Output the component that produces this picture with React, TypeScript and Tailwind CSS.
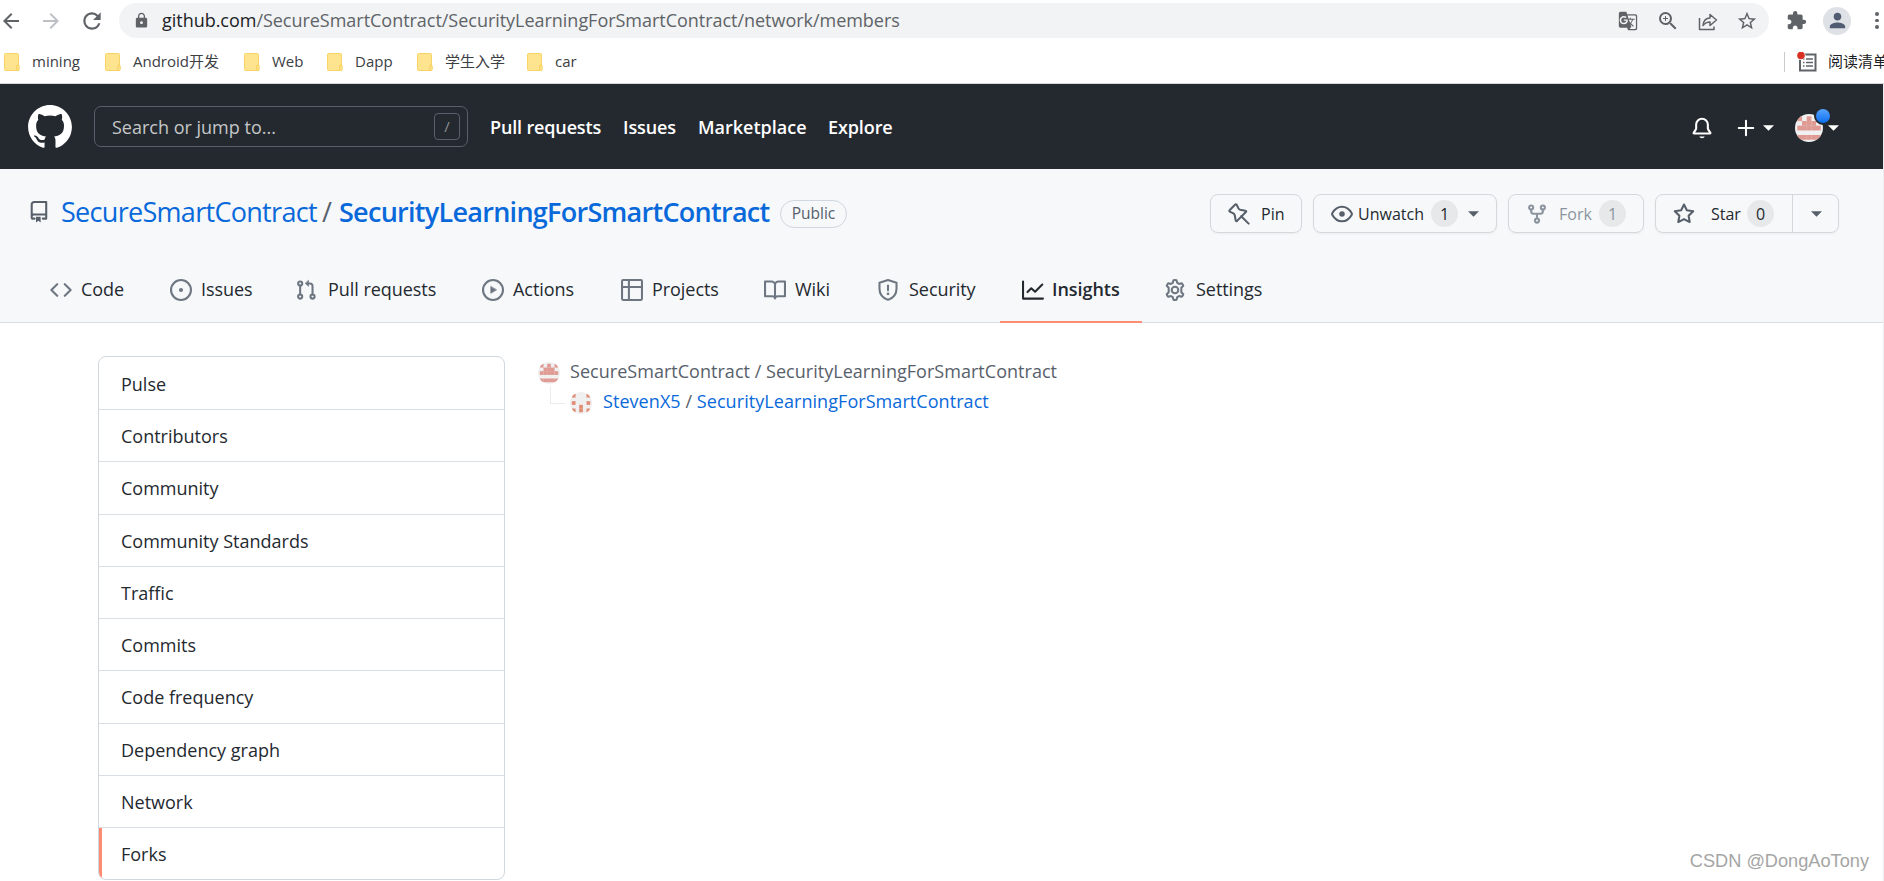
import React from "react";
import { MdArrowBack, MdArrowForward, MdRefresh, MdLock, MdGTranslate, MdZoomIn, MdStarBorder, MdExtension, MdPerson } from "react-icons/md";

const bookmarks = [
  { label: "mining", className: "w-[101px]" },
  { label: "Android开发", className: "w-[139px]" },
  { label: "Web", className: "w-[83px]" },
  { label: "Dapp", className: "w-[90px]" },
  { label: "学生入学", className: "w-[110px]" },
  { label: "car", className: "w-[60px]" },
];

const sidebarItems = [
  "Pulse",
  "Contributors",
  "Community",
  "Community Standards",
  "Traffic",
  "Commits",
  "Code frequency",
  "Dependency graph",
  "Network",
  "Forks",
];

type IconProps = { children: React.ReactNode; className?: string };

const Icon = ({ children, className = "" }: IconProps): JSX.Element => (
  <svg viewBox="0 0 16 16" className={`w-[22px] h-[22px] shrink-0 ${className}`} fill="none" stroke="currentColor" strokeWidth="1.5" strokeLinecap="round" strokeLinejoin="round">
    {children}
  </svg>
);

const CodeIcon = () => (
  <Icon>
    <path d="M5.25 3.75 1 8l4.25 4.25M10.75 3.75 15 8l-4.25 4.25" />
  </Icon>
);

const IssueIcon = () => (
  <Icon>
    <circle cx="8" cy="8" r="7.25" />
    <circle cx="8" cy="8" r="1.5" fill="currentColor" stroke="none" />
  </Icon>
);

const PullRequestIcon = () => (
  <Icon>
    <circle cx="3.75" cy="3.25" r="1.5" />
    <circle cx="3.75" cy="12.75" r="1.5" />
    <circle cx="12.75" cy="12.75" r="1.5" />
    <path d="M3.75 4.75v6.5M12.75 11.25V5a1.75 1.75 0 0 0-1.75-1.75H9.5" />
    <path d="M9.8 1.2v4.1L7.6 3.25z" fill="currentColor" strokeWidth=".5" />
  </Icon>
);

const PlayIcon = () => (
  <Icon>
    <circle cx="8" cy="8" r="7.25" />
    <path d="M6.4 5.6v4.8L10.4 8z" fill="currentColor" strokeWidth=".5" />
  </Icon>
);

const ProjectsIcon = () => (
  <Icon>
    <rect x=".75" y=".75" width="14.5" height="14.5" rx=".8" />
    <path d="M5.75 1v14M1 5.75h14" />
  </Icon>
);

const BookIcon = () => (
  <Icon>
    <path d="M8 14.2c0-1 .9-1.7 2.2-1.7h5.05V1.75H10.7C9.2 1.75 8 2.9 8 4.3zM8 14.2c0-1-.9-1.7-2.2-1.7H.75V1.75H5.3C6.8 1.75 8 2.9 8 4.3z" />
  </Icon>
);

const ShieldIcon = () => (
  <Icon>
    <path d="M8 .8 14.2 2.8V7c0 4.3-2.3 6.7-6.2 8.2C4.1 13.7 1.8 11.3 1.8 7V2.8z" />
    <path d="M8 4.75v3.5" />
    <circle cx="8" cy="10.8" r="1" fill="currentColor" stroke="none" />
  </Icon>
);

const GraphIcon = () => (
  <Icon>
    <path d="M.75 1.75v12.5h14.5M4 9.5l2.75-2.75 2.75 2.5 5.25-5.25" />
  </Icon>
);

const GearIcon = () => (
  <Icon>
    <circle cx="8" cy="8" r="2.4" />
    <path d="M6.900.9Q8 .6 9.100.9l.55 1.900 1.300.75 1.950-.5q.8.750 1.100 1.900L12.600 6.400v1.600 1.600L14 11.050q-.3 1.150-1.100 1.900l-1.950-.5-1.300.75-.55 1.900Q8 15.400 6.900 15.100l-.55-1.900-1.300-.75-1.950.5Q2.300 12.200 2 11.050L3.400 9.600V6.400L2 4.950q.3-1.150 1.100-1.900l1.950.5 1.300-.75z" />
  </Icon>
);

const PinIcon = () => (
  <Icon>
    <path d="M9.6 9.6 15 15M5.1 1.3q.55-.7 1.2 0l1.3 2.6q.4.8 1.3 1l3.7.7q1 .3.4 1L6.6 13q-.7.6-1-.4l-.7-3.7q-.2-.9-1-1.3L1.300 6.300q-.7-.65 0-1.200z" />
  </Icon>
);

const EyeIcon = () => (
  <Icon>
    <path d="M8 2.75c3.5 0 5.8 2.5 7 4.6q.4.65 0 1.3c-1.2 2.100-3.500 4.600-7 4.600s-5.800-2.500-7-4.600q-.4-.65 0-1.300c1.200-2.100 3.500-4.600 7-4.600z" />
    <circle cx="8" cy="8" r="2" fill="currentColor" stroke="none" />
  </Icon>
);

const ForkIcon = () => (
  <Icon>
    <circle cx="3.75" cy="3.25" r="1.5" />
    <circle cx="12.25" cy="3.25" r="1.5" />
    <circle cx="8" cy="12.75" r="1.5" />
    <path d="M3.75 4.75v1.5c0 .8.7 1.5 1.5 1.5h5.5c.8 0 1.5-.7 1.5-1.5v-1.5M8 7.75v3.5" />
  </Icon>
);

const StarIcon = () => (
  <Icon>
    <path d="m8 1.1 2.070 4.200 4.630.67-3.350 3.270.79 4.610L8 11.670l-4.140 2.180.79-4.610L1.300 5.970l4.630-.67z" />
  </Icon>
);

const Caret = ({ className = "" }: { className?: string }) => (
  <svg viewBox="0 0 12 6" className={`w-[11px] h-[6px] shrink-0 ${className}`} fill="currentColor">
    <path d="M0 0h12L6 6z" />
  </svg>
);

// 5x5 identicon, rows of 1/0 flags
const Identicon = ({ rows, className, color }: { rows: string[]; className: string; color: string }) => (
  <svg viewBox="0 0 6 6" className={`rounded-full bg-[#f0f0f0] shrink-0 ${className}`} fill={color}>
    {rows.map((row, y) =>
      row.split("").map((cell, x) => (cell === "1" ? <rect key={`${x}-${y}`} x={x + 0.5} y={y + 0.5} width="1.02" height="1.02" /> : null))
    )}
  </svg>
);

const ownerRows = ["10101", "01110", "11111", "00000", "11111"];
const stevenRows = ["10001", "00000", "10001", "00100", "10101"];

const tabs = [
  { label: "Code", icon: <CodeIcon />, className: "w-[120px]" },
  { label: "Issues", icon: <IssueIcon />, className: "w-[125px]" },
  { label: "Pull requests", icon: <PullRequestIcon />, className: "w-[187px] [&>span]:ml-[2px]" },
  { label: "Actions", icon: <PlayIcon />, className: "w-[139px]" },
  { label: "Projects", icon: <ProjectsIcon />, className: "w-[143px]" },
  { label: "Wiki", icon: <BookIcon />, className: "w-[113px]" },
  { label: "Security", icon: <ShieldIcon />, className: "w-[145px] [&>span]:ml-px" },
  { label: "Insights", icon: <GraphIcon />, className: "w-[142px] [&>span]:-ml-px", active: true },
  { label: "Settings", icon: <GearIcon />, className: "w-[144px] [&>span]:ml-px" },
];

const BrowserBar = (): JSX.Element => (
  <div className="h-[84px] bg-white border-b border-[#d5d7da] overflow-hidden text-[#5f6368]">
    <div className="flex items-center h-[41px]">
      <MdArrowBack className="w-[24px] h-[24px] -ml-px shrink-0" />
      <MdArrowForward className="w-[24px] h-[24px] ml-[16px] shrink-0 text-[#bdc1c6]" />
      <MdRefresh className="w-[26px] h-[26px] ml-[16px] shrink-0" />
      <div className="flex items-center w-[1650px] h-[35px] ml-[14px] shrink-0 rounded-full bg-[#f1f3f4]">
        <MdLock className="w-[17px] h-[17px] ml-[14px] shrink-0" />
        <div className="ml-[12px] text-[18px] whitespace-nowrap tracking-[-0.03px]">
          <span className="text-[#202124]">github.com</span>/SecureSmartContract/SecurityLearningForSmartContract/network/members
        </div>
        <div className="flex items-center gap-[18px] ml-auto mr-[11px]">
          <MdGTranslate className="w-[20px] h-[20px]" />
          <MdZoomIn className="w-[24px] h-[24px]" />
          <svg viewBox="0 0 20 20" className="w-[20px] h-[20px]" fill="none" stroke="currentColor" strokeWidth="1.5">
            <path d="M1.5 7v11.500h14.500v-3M5 14.500c.5-4.500 3-7.500 7-7.500V3.500l6.500 5.500-6.500 5.500v-3.500c-3 0-5 1-7 3.500z" strokeLinejoin="round" />
          </svg>
          <MdStarBorder className="w-[22px] h-[22px]" />
        </div>
      </div>
      <MdExtension className="w-[21px] h-[21px] ml-[17px] shrink-0" />
      <div className="flex items-center justify-center w-[28px] h-[28px] ml-[16px] shrink-0 rounded-full bg-[#dee1e6] text-[#515c73]">
        <MdPerson className="w-[23px] h-[23px]" />
      </div>
      <div className="flex flex-col gap-[3px] ml-[24px]">
        <span className="w-[3.5px] h-[3.5px] rounded-full bg-[#5f6368]" />
        <span className="w-[3.5px] h-[3.5px] rounded-full bg-[#5f6368]" />
        <span className="w-[3.5px] h-[3.5px] rounded-full bg-[#5f6368]" />
      </div>
    </div>

    {/* Bookmarks */}
    <div className="flex items-center h-[41px] pl-[4px] text-[15px] text-[#3c4043] whitespace-nowrap">
      {bookmarks.map((bookmark) => (
        <div key={bookmark.label} className={`flex items-center shrink-0 ${bookmark.className}`}>
          <svg viewBox="0 0 16 18" className="w-[16px] h-[18px] mr-[12px] shrink-0">
            <rect x=".5" y=".5" width="14" height="17" rx="1" fill="#ffe48f" stroke="#f8d466" />
            <rect x="12.7" y="12" width="2.5" height="5.5" rx="1" fill="#ffe48f" stroke="#f2c94f" strokeWidth=".8" />
          </svg>
          <span>{bookmark.label}</span>
        </div>
      ))}
      <div className="flex items-center shrink-0 ml-auto -mr-[4px]">
        <div className="w-px h-[20px] bg-[#c9cbce] mr-[12px]" />
        <svg viewBox="0 0 20 20" className="w-[20px] h-[20px] mr-[12px]">
          <rect x="3" y="2.5" width="15.5" height="16" fill="none" stroke="#5f6368" strokeWidth="2" />
          <path d="M6 7h1.5M9 7h7M6 10.5h1.5M9 10.5h7M6 14h1.5M9 14h7" stroke="#5f6368" strokeWidth="1.5" />
          <circle cx="4" cy="3.5" r="4.5" fill="#fff" />
          <circle cx="4" cy="3.5" r="3.8" fill="#d93025" />
        </svg>
        <span className="text-[15px] text-[#202124] -ml-px">阅读清单</span>
      </div>
    </div>
  </div>
);

const GlobalHeader = (): JSX.Element => (
  <header className="flex items-center h-[85px] bg-[#24292f] text-white">
    <svg viewBox="0 0 16 15.7" className="w-[44px] h-[43px] ml-[28px] shrink-0" fill="currentColor">
      <path d="M8 0C3.58 0 0 3.58 0 8c0 3.54 2.29 6.53 5.47 7.59.4.07.55-.17.55-.38 0-.19-.01-.82-.01-1.49-2.01.37-2.53-.49-2.69-.94-.09-.23-.48-.94-.82-1.13-.28-.15-.68-.52-.01-.53.63-.01 1.08.58 1.23.82.72 1.21 1.87.87 2.33.66.07-.52.28-.87.51-1.07-1.78-.2-3.64-.89-3.64-3.95 0-.87.31-1.59.82-2.15-.08-.2-.36-1.02.08-2.12 0 0 .67-.21 2.2.82.64-.18 1.32-.27 2-.27.68 0 1.36.09 2 .27 1.53-1.04 2.2-.82 2.2-.82.44 1.1.16 1.92.08 2.12.51.56.82 1.27.82 2.15 0 3.07-1.87 3.75-3.65 3.95.29.25.54.73.54 1.48 0 1.07-.01 1.93-.01 2.2 0 .21.15.46.55.38A8.013 8.013 0 0 0 16 8c0-4.42-3.58-8-8-8z" />
    </svg>
    <div className="flex items-center w-[374px] h-[41px] ml-[22px] pl-[17px] pr-[7px] shrink-0 rounded-[7px] border border-[#57606a] text-[18px] text-[#c5c7c9]">
      <span className="grow pt-[2px]">Search or jump to...</span>
      <span className="flex items-center justify-center w-[26px] h-[27px] rounded-[4px] border border-[#57606a] text-[15px] text-[#8b9096]">/</span>
    </div>
    <nav className="flex items-center ml-[22px] pt-[2px] text-[18px] font-semibold whitespace-nowrap">
      <a className="w-[133px] tracking-[-0.15px]">Pull requests</a>
      <a className="w-[75px] tracking-[-0.1px]">Issues</a>
      <a className="w-[130px]">Marketplace</a>
      <a className="tracking-[-0.1px]">Explore</a>
    </nav>
    <div className="flex items-center ml-auto mr-[44px] pt-[2px]">
      <Icon>
        <path d="M8 1.25A4.25 4.25 0 0 0 3.75 5.5v2.7q0 .4-.2.8L1.9 11.5q-.2.5.3.5h11.6q.5 0 .3-.5L12.45 9q-.2-.4-.2-.8V5.5A4.25 4.25 0 0 0 8 1.25z" />
        <path d="M6 14.200h4a2.100 1.800 0 0 1-4 0z" fill="currentColor" stroke="none" />
      </Icon>
      <Icon className="ml-[22px]">
        <path d="M8 2.75v10.5M2.75 8h10.5" />
      </Icon>
      <Caret className="ml-[6px]" />
      <div className="relative ml-[21px]">
        <Identicon rows={ownerRows} className="w-[28px] h-[28px]" color="#df9a93" />
        <span className="absolute -top-[7px] left-[19px] w-[18px] h-[18px] rounded-full border-2 border-[#24292f] bg-linear-to-b from-[#54a3ff] to-[#006eed]" />
      </div>
      <Caret className="ml-[5px]" />
    </div>
  </header>
);

const Counter = ({ children }: { children: React.ReactNode }) => (
  <span className="flex items-center justify-center w-[27px] h-[27px] shrink-0 rounded-full bg-[#e6e8ea]">{children}</span>
);

const RepoHeader = (): JSX.Element => (
  <section className="h-[154px] bg-[#f6f8fa] border-b border-[#d8dee4]">
    <div className="flex items-center h-[89px]">
      <Icon className="ml-[28px] mb-[3px] text-[#57606a]">
        <path d="M4.75 12.8H3.2q-.5 0-.5-.5V2.5A1.75 1.75 0 0 1 4.45.75h8.8v12.05h-2.5M2.7 12V11a1.5 1.5 0 0 1 1.5-1.25h9" />
        <path d="M5.8 11.5h3.4v4.2L7.5 14.4l-1.7 1.3z" fill="currentColor" stroke="none" />
      </Icon>
      <div className="flex items-center ml-[11px] mb-[2px] text-[27px] text-[#0969da] whitespace-nowrap">
        <span className="w-[261px] tracking-[-0.7px]">SecureSmartContract</span>
        <span className="w-[17px] text-[#57606a]">/</span>
        <span className="w-[441px] font-semibold tracking-[-0.72px]">SecurityLearningForSmartContract</span>
      </div>
      <span className="flex items-center justify-center w-[67px] h-[28px] shrink-0 rounded-full border border-[#d0d7de] text-[15.5px] font-medium text-[#57606a]">Public</span>

      <div className="flex items-center ml-auto mr-[44px] text-[16px] font-medium text-[#24292f] whitespace-nowrap">
        <div className="flex items-center w-[92px] h-[39px] pl-[17px] rounded-[8px] border border-[#d5d8da] shadow-xs [&_svg]:text-[#57606a]">
          <PinIcon />
          <span className="ml-[11px]">Pin</span>
        </div>
        <div className="flex items-center w-[184px] h-[39px] ml-[11px] pl-[17px] rounded-[8px] border border-[#d5d8da] shadow-xs [&_svg]:text-[#57606a]">
          <EyeIcon />
          <span className="ml-[5px] w-[73px]">Unwatch</span>
          <Counter>1</Counter>
          <Caret className="ml-[10px]" />
        </div>
        <div className="flex items-center w-[136px] h-[39px] ml-[11px] pl-[17px] rounded-[8px] border border-[#d5d8da] shadow-xs text-[#8c959f]">
          <ForkIcon />
          <span className="ml-[11px] w-[40px]">Fork</span>
          <Counter>1</Counter>
        </div>
        <div className="flex items-center w-[184px] h-[39px] ml-[11px] rounded-[8px] border border-[#d5d8da] shadow-xs [&_svg]:text-[#57606a]">
          <div className="flex items-center w-[137px] h-full pl-[17px] border-r border-[#d5d8da]">
            <StarIcon />
            <span className="ml-[16px] w-[36px]">Star</span>
            <Counter>0</Counter>
          </div>
          <Caret className="ml-[18px]" />
        </div>
      </div>
    </div>

    <nav className="flex h-[65px] pl-[28px] text-[18px] text-[#24292f] whitespace-nowrap">
      {tabs.map((tab) => (
        <a
          key={tab.label}
          className={`flex items-center h-full pl-[22px] pb-[2px] pt-[2px] gap-[9px] shrink-0 ${tab.className} ${
            tab.active ? "font-semibold border-b-2 border-[#fd8c73]" : "border-b-2 border-transparent [&>svg]:text-[#6e7781]"
          }`}
        >
          {tab.icon}
          <span className="tracking-[-0.05px]">{tab.label}</span>
        </a>
      ))}
    </nav>
  </section>
);

const Sidebar = (): JSX.Element => (
  <nav className="w-[407px] h-[524px] ml-[98px] shrink-0 rounded-[8px] border border-[#d0d7de] overflow-hidden text-[18px] text-[#24292f]">
    {sidebarItems.map((item) => (
      <a
        key={item}
        className={`flex items-center h-[52.25px] first:h-[53px] last:h-[51px] pl-[22px] pt-[2px] not-last:border-b border-[#d8dee4] ${
          item === "Forks" ? "shadow-[inset_3px_0_0_#fd8c73]" : ""
        }`}
      >
        {item}
      </a>
    ))}
  </nav>
);

const ForkTree = (): JSX.Element => (
  <div className="ml-[33px] text-[18px] text-[#57606a] whitespace-nowrap">
    <div className="flex items-center h-[30px]">
      <Identicon rows={ownerRows} className="w-[22px] h-[22px] mt-[4px]" color="#df9a93" />
      <span className="ml-[10px] tracking-[0.03px]">SecureSmartContract / SecurityLearningForSmartContract</span>
    </div>
    <div className="flex items-center h-[30px]">
      <div className="w-[15px] h-[18px] ml-[12px] mb-[13px] border-l border-b border-[#eaecef]" />
      <Identicon rows={stevenRows} className="w-[22px] h-[22px] ml-[5px] mt-[4px]" color="#e08d76" />
      <span className="ml-[11px] tracking-[0.06px]">
        <a className="text-[#0969da]">StevenX5</a> / <a className="text-[#0969da]">SecurityLearningForSmartContract</a>
      </span>
    </div>
  </div>
);

export default function App(): JSX.Element {
  return (
    <div className="relative w-[1884px] h-[881px] bg-white overflow-hidden font-['Open_Sans','Noto_Sans_CJK_SC',sans-serif]">
      <BrowserBar />
      <div className="h-[797px] border-r border-[#eceef0]">
        <GlobalHeader />
        <RepoHeader />
        <main className="flex pt-[33px]">
          <Sidebar />
          <ForkTree />
        </main>
      </div>
      <div className="absolute right-[15px] bottom-[6px] font-['Liberation_Sans',sans-serif] text-[18.2px] text-[#a5a5a5]">CSDN @DongAoTony</div>
    </div>
  );
}
